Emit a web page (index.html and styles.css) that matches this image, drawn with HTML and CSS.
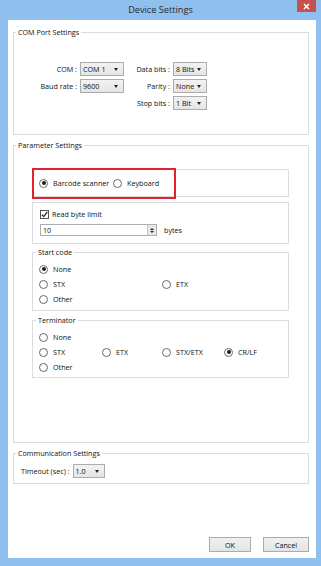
FILE: index.html
```html
<!DOCTYPE html>
<html lang="en">
<head>
    <meta charset="UTF-8">
    <meta name="viewport" content="width=device-width, initial-scale=1.0">
    <title>Device Settings</title>
    <link rel="stylesheet" href="styles.css">
</head>
<body>
    <div class="window">
        <div class="titlebar">
            <span class="title">Device Settings</span>
            <span class="close">
                <svg width="7" height="7" viewBox="0 0 7 7"><path d="M1 1L6 6M6 1L1 6" stroke="#fff" stroke-width="1.6"/></svg>
            </span>
        </div>

        <div class="client">
            <fieldset class="group com">
                <legend>COM Port Settings</legend>
                <div class="com-grid">
                    <span class="lbl">COM :</span>
                    <div class="combo">COM 1</div>
                    <span class="lbl">Data bits :</span>
                    <div class="combo">8 Bits</div>

                    <span class="lbl">Baud rate :</span>
                    <div class="combo">9600</div>
                    <span class="lbl">Parity :</span>
                    <div class="combo">None</div>

                    <span class="lbl col3">Stop bits :</span>
                    <div class="combo">1 Bit</div>
                </div>
            </fieldset>

            <fieldset class="group params">
                <legend>Parameter Settings</legend>
                <div class="params-body">
                    <div class="box mode">
                        <label class="opt"><span class="radio on"></span>Barcode scanner</label>
                        <label class="opt"><span class="radio"></span>Keyboard</label>
                        <div class="highlight"></div>
                    </div>

                    <div class="box limit">
                        <label class="opt check-row">
                            <span class="check">
                                <svg width="7" height="7" viewBox="0 0 7 7"><path d="M0.8 3.6L2.7 5.6L6.3 0.9" fill="none" stroke="#222" stroke-width="1.3"/></svg>
                            </span>Read byte limit
                        </label>
                        <div class="input-row">
                            <div class="spinbox">
                                <span class="value">10</span>
                                <span class="spin"><i class="up"></i><i class="down"></i></span>
                            </div>
                            <span>bytes</span>
                        </div>
                    </div>

                    <fieldset class="sub">
                        <legend>Start code</legend>
                        <div class="options">
                            <label class="opt"><span class="radio on"></span>None</label>
                            <label class="opt c1"><span class="radio"></span>STX</label>
                            <label class="opt c3"><span class="radio"></span>ETX</label>
                            <label class="opt c1"><span class="radio"></span>Other</label>
                        </div>
                    </fieldset>

                    <fieldset class="sub term">
                        <legend>Terminator</legend>
                        <div class="options">
                            <label class="opt"><span class="radio"></span>None</label>
                            <label class="opt c1"><span class="radio"></span>STX</label>
                            <label class="opt"><span class="radio"></span>ETX</label>
                            <label class="opt"><span class="radio"></span>STX/ETX</label>
                            <label class="opt"><span class="radio on"></span>CR/LF</label>
                            <label class="opt c1"><span class="radio"></span>Other</label>
                        </div>
                    </fieldset>
                </div>
            </fieldset>

            <fieldset class="group comm">
                <legend>Communication Settings</legend>
                <div class="comm-row">
                    <span class="timeout-lbl">Timeout (sec) :</span>
                    <div class="combo timeout">1.0</div>
                </div>
            </fieldset>

            <div class="actions">
                <button class="btn ok">OK</button>
                <button class="btn cancel">Cancel</button>
            </div>
        </div>
    </div>
</body>
</html>
```

FILE: styles.css
```css
body {
    margin: 0;
    font-family: "Open Sans", "Noto Sans", sans-serif;
    font-size: 7.2px;
    color: #111;
}

.window {
    width: 321px;
    height: 566px;
    background: #8fc0ee;
    display: flex;
    flex-direction: column;
}

/* title bar */
.titlebar {
    height: 20px;
    display: grid;
    grid-template-columns: 1fr auto 1fr;
}
.title {
    grid-column: 2;
    line-height: 20px;
    font-size: 9.2px;
    color: #2b2b2b;
}
.close {
    grid-column: 3;
    justify-self: end;
    align-self: start;
    width: 19px;
    height: 12px;
    margin-right: 5px;
    background: #c75050;
    display: flex;
    align-items: center;
    justify-content: center;
}

.client {
    flex: 1;
    background: #fff;
    margin: 0 5px 8px 8px;
    display: flex;
    flex-direction: column;
}

/* group boxes */
fieldset {
    min-width: 0;
    margin: 0;
    padding: 0 2px;
    border: 1px solid #dcdcdc;
}
legend {
    padding: 0 2px;
    line-height: 10px;
}
.group {
    margin: 5px 7px 0 5px;
}
.group.com {
    margin-top: 7px;
}

.com-grid {
    display: grid;
    grid-template-columns: 47px 44px 43px 34px;
    grid-auto-rows: 14px;
    column-gap: 3px;
    row-gap: 3px;
    align-items: center;
    padding: 25px 0 24px 14px;
}
.lbl {
    text-align: right;
}
.col3 {
    grid-column: 3;
}

.combo {
    height: 14px;
    box-sizing: border-box;
    border: 1px solid #acacac;
    background: linear-gradient(#f2f2f2, #e5e5e5);
    padding-left: 2px;
    line-height: 12px;
    position: relative;
}
.combo::after {
    content: "";
    position: absolute;
    right: 5px;
    top: 5px;
    border-left: 2.5px solid transparent;
    border-right: 2.5px solid transparent;
    border-top: 3px solid #222;
}

/* parameter settings */
.params-body {
    padding: 19px 17px 64px 16px;
}
.box {
    border: 1px solid #dcdcdc;
}
.mode {
    position: relative;
    height: 28px;
    box-sizing: border-box;
    display: grid;
    grid-template-columns: 74px auto;
    align-items: center;
    padding-left: 6px;
}
.highlight {
    position: absolute;
    left: -1px;
    top: -2px;
    width: 144px;
    height: 31px;
    box-sizing: border-box;
    border: 2px solid #e0242c;
}

.opt {
    display: flex;
    align-items: center;
    gap: 5px;
    white-space: nowrap;
}
.radio {
    width: 9px;
    height: 9px;
    box-sizing: border-box;
    border: 1px solid #6a6a6a;
    border-radius: 50%;
    background: #fff;
    display: flex;
    align-items: center;
    justify-content: center;
    flex: none;
}
.radio.on::after {
    content: "";
    width: 4px;
    height: 4px;
    border-radius: 50%;
    background: #1e1e1e;
}

.limit {
    margin-top: 5px;
    padding: 5px 0 7px 7px;
}
.check-row {
    height: 12px;
    gap: 3px;
}
.check {
    width: 9px;
    height: 9px;
    box-sizing: border-box;
    border: 1px solid #555;
    background: #fff;
    display: flex;
    align-items: center;
    justify-content: center;
}
.input-row {
    margin-top: 4px;
    display: flex;
    align-items: center;
    gap: 7px;
}
.spinbox {
    width: 117px;
    height: 12px;
    box-sizing: border-box;
    border: 1px solid #abadb3;
    display: flex;
}
.value {
    flex: 1;
    padding-left: 2px;
    line-height: 10px;
}
.spin {
    width: 8px;
    background: #e8e8e8;
    border-left: 1px solid #c8c8c8;
    display: flex;
    flex-direction: column;
    align-items: center;
    justify-content: center;
    gap: 1px;
}
.spin i {
    border-left: 2px solid transparent;
    border-right: 2px solid transparent;
}
.spin .up {
    border-bottom: 2px solid #222;
}
.spin .down {
    border-top: 2px solid #222;
}

.sub {
    margin-top: 3px;
    padding: 0 2px 0 3px;
}
.sub.term {
    margin-top: 4px;
}
.options {
    display: grid;
    grid-template-columns: 63px 60px 62px auto;
    grid-auto-rows: 14px;
    row-gap: 1px;
    align-items: center;
    padding: 5px 0 4px 3px;
}
.term .options {
    padding-bottom: 3px;
}
.c1 {
    grid-column: 1;
}
.c3 {
    grid-column: 3;
}

/* communication */
.comm-row {
    display: flex;
    align-items: center;
    gap: 3px;
    padding: 6px 0 5px 5px;
}
.timeout-lbl {
    white-space: nowrap;
}
.timeout {
    width: 32px;
}

/* bottom buttons */
.actions {
    margin-top: auto;
    margin-bottom: 6px;
    padding-right: 7px;
    display: flex;
    justify-content: flex-end;
    gap: 12px;
}
.btn {
    height: 15px;
    border: 1px solid #acacac;
    background: linear-gradient(#f0f0f0, #e5e5e5);
    font-family: inherit;
    font-size: 7.2px;
    color: #111;
    padding: 0;
}
.ok {
    width: 42px;
}
.cancel {
    width: 46px;
}
```
